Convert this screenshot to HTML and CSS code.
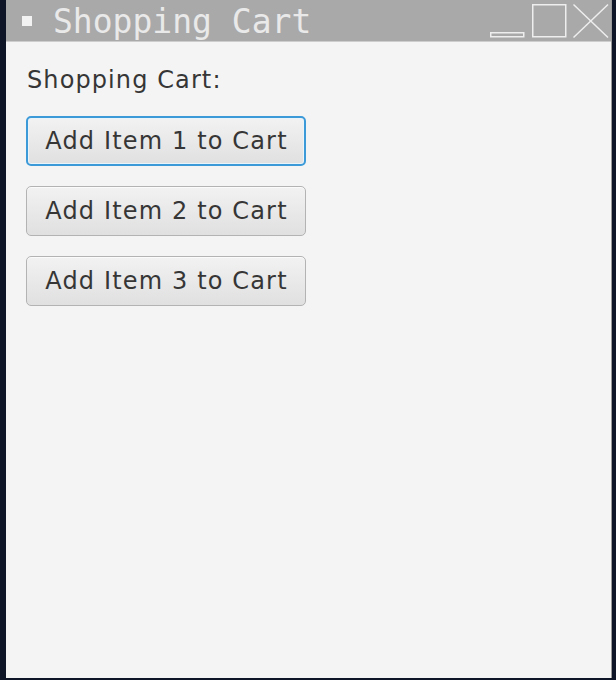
FILE: index.html
```html
<!DOCTYPE html>
<html>
<head>
<meta charset="utf-8">
<link rel="stylesheet" href="styles.css">
</head>
<body>
<div class="window">
  <div class="titlebar">
    <span class="app-icon"></span>
    <span class="title">Shopping Cart</span>
    <svg class="controls" width="122" height="41" viewBox="0 0 122 41">
      <rect x="2.75" y="32.75" width="33" height="4" fill="none" stroke="#eeeeee" stroke-width="1.5"/>
      <rect x="44.75" y="4.75" width="33" height="32" fill="none" stroke="#eeeeee" stroke-width="1.5"/>
      <line x1="85.5" y1="4.5" x2="120" y2="37.5" stroke="#eeeeee" stroke-width="1.5"/>
      <line x1="120" y1="4.5" x2="85.5" y2="37.5" stroke="#eeeeee" stroke-width="1.5"/>
    </svg>
  </div>
  <div class="content">
    <div class="label">Shopping Cart:</div>
    <button class="btn focused">Add Item 1 to Cart</button>
    <button class="btn">Add Item 2 to Cart</button>
    <button class="btn">Add Item 3 to Cart</button>
  </div>
</div>
</body>
</html>
```
FILE: styles.css
```css
html, body {
  margin: 0;
  padding: 0;
  background: #0d1526;
  width: 616px;
  height: 680px;
  overflow: hidden;
}
.window {
  margin-left: 6px;
  width: 606px;
  height: 678px;
  display: flex;
  flex-direction: column;
  background: #f4f4f4;
  border-right: 1px solid #9a9a9a;
  box-sizing: border-box;
}
.titlebar {
  height: 42px;
  box-sizing: border-box;
  background: #a9a9a9;
  border-bottom: 1px solid #cdcdcd;
  display: flex;
  align-items: flex-start;
  flex-shrink: 0;
}
.app-icon {
  width: 10px;
  height: 10px;
  background: #f2f2f2;
  margin-left: 16px;
  margin-top: 16px;
  flex-shrink: 0;
}
.title {
  font-family: "DejaVu Sans Mono", monospace;
  font-size: 33px;
  line-height: 40px;
  color: #e9e9e9;
  margin-left: 21px;
  margin-top: 2px;
  white-space: nowrap;
}
.controls {
  margin-left: auto;
  margin-right: 1px;
  display: block;
}
.content {
  flex: 1;
  display: flex;
  flex-direction: column;
  align-items: flex-start;
  padding: 24px 20px 0 20px;
  font-family: "DejaVu Sans", sans-serif;
  color: #363636;
}
.label {
  font-size: 24px;
  line-height: 28px;
  letter-spacing: 1.1px;
  margin-left: 1px;
  margin-bottom: 22px;
}
.btn {
  width: 280px;
  height: 50px;
  box-sizing: border-box;
  font-family: "DejaVu Sans", sans-serif;
  font-size: 24px;
  letter-spacing: 1.15px;
  color: #363636;
  border: 1px solid #b3b3b3;
  border-radius: 5px;
  background: linear-gradient(#f2f2f2, #e0e0e0);
  padding: 0 0 0 1px;
  margin: 0 0 20px 0;
  text-align: center;
  box-shadow: inset 0 1px 0 #fbfbfb;
}
.btn.focused {
  border: 2px solid #3c9ad9;
  box-shadow: inset 0 0 0 1px #e9f3fa;
}
```
